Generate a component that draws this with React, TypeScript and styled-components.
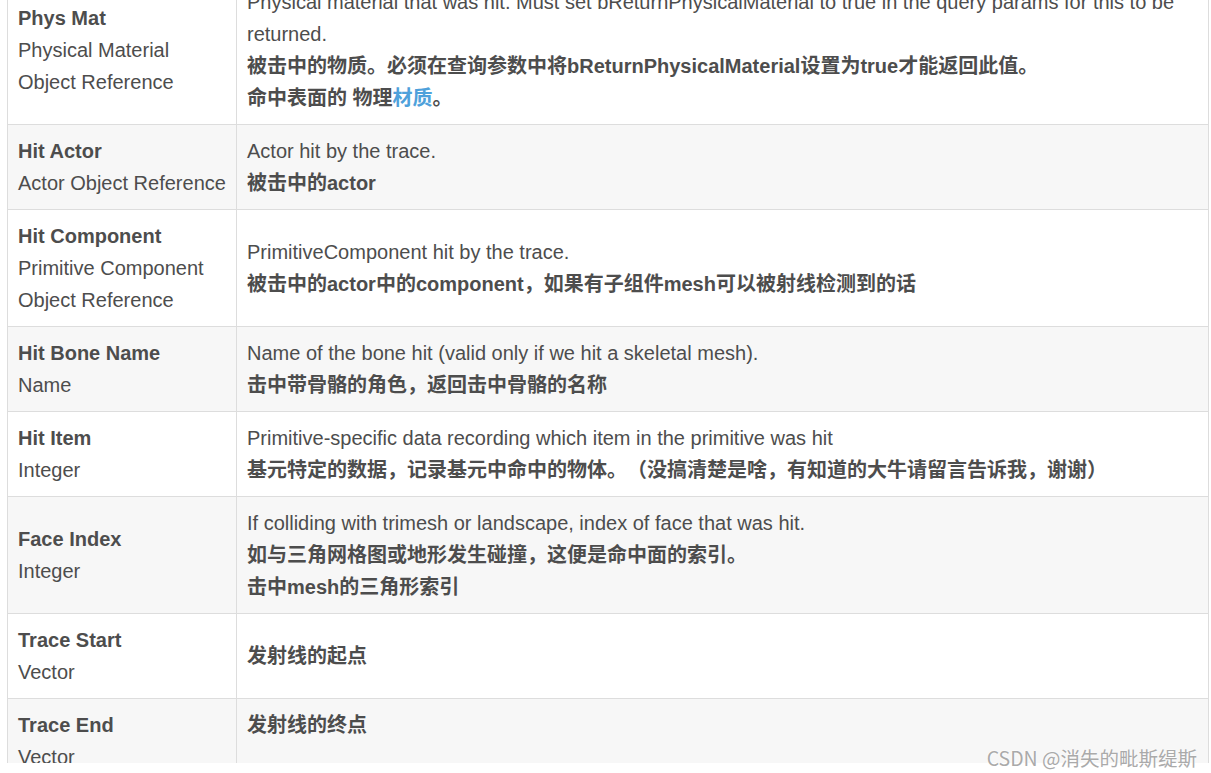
import React from "react";
import styled, { createGlobalStyle } from "styled-components";

const Global = createGlobalStyle`
  html, body { margin: 0; padding: 0; background: #fff; }
  body { font-family: "Liberation Sans", Arial, "Noto Sans CJK SC", sans-serif; color: #4d4d4d; }
`;

const Page = styled.div`
  width: 1211px;
  height: 773px;
  overflow: hidden;
  position: relative;
  background: #fff;
`;

const Viewport = styled.div`
  height: 763px;
  overflow: hidden;
  padding-left: 7px;
  padding-right: 2px;
`;

const Table = styled.table`
  width: 1202px;
  margin-top: -25px;
  border-collapse: collapse;
  font-size: 20px;
  line-height: 32px;
  table-layout: fixed;
  text-spacing-trim: space-all;
`;

const Row = styled.tr<{ $alt: boolean }>`
  background: ${(p) => (p.$alt ? "#f7f7f7" : "#ffffff")};
`;

const Cell = styled.td<{ $w?: number; $top?: boolean }>`
  border: 1px solid #dddddd;
  padding: 10px 10px;
  vertical-align: ${(p) => (p.$top ? "top" : "middle")};
  width: ${(p) => (p.$w ? `${p.$w}px` : "auto")};
  box-sizing: border-box;
`;

const Line = styled.div<{ $bold?: boolean }>`
  font-weight: ${(p) => (p.$bold ? 700 : 400)};
  white-space: normal;
`;

const ZhLine = styled.div`
  font-weight: 700;
  font-family: "Liberation Sans", "Noto Sans CJK SC", sans-serif;
`;

const Link = styled.span`
  color: #4ea1db;
`;

const Watermark = styled.div`
  position: absolute;
  right: 14px;
  bottom: 4px;
  font-family: "Noto Sans CJK SC", "Liberation Sans", sans-serif;
  font-size: 19.5px;
  line-height: 22px;
  color: #aaaaaa;
  text-shadow: 0 0 2px #fff, 0 0 2px #fff;
`;

type RowData = {
  name: string;
  types: string[];
  desc: React.ReactNode[];
  top?: boolean;
};

const rows: RowData[] = [
  {
    name: "Phys Mat",
    types: ["Physical Material", "Object Reference"],
    desc: [
      <Line key="a">
        Physical material that was hit. Must set bReturnPhysicalMaterial to true in the query params for this to be returned.
      </Line>,
      <ZhLine key="b">被击中的物质。必须在查询参数中将bReturnPhysicalMaterial设置为true才能返回此值。</ZhLine>,
      <ZhLine key="c">
        命中表面的 物理<Link>材质</Link>。
      </ZhLine>,
    ],
  },
  {
    name: "Hit Actor",
    types: ["Actor Object Reference"],
    desc: [<Line key="a">Actor hit by the trace.</Line>, <ZhLine key="b">被击中的actor</ZhLine>],
  },
  {
    name: "Hit Component",
    types: ["Primitive Component", "Object Reference"],
    desc: [
      <Line key="a">PrimitiveComponent hit by the trace.</Line>,
      <ZhLine key="b">被击中的actor中的component，如果有子组件mesh可以被射线检测到的话</ZhLine>,
    ],
  },
  {
    name: "Hit Bone Name",
    types: ["Name"],
    desc: [
      <Line key="a">Name of the bone hit (valid only if we hit a skeletal mesh).</Line>,
      <ZhLine key="b">击中带骨骼的角色，返回击中骨骼的名称</ZhLine>,
    ],
  },
  {
    name: "Hit Item",
    types: ["Integer"],
    desc: [
      <Line key="a">Primitive-specific data recording which item in the primitive was hit</Line>,
      <ZhLine key="b">基元特定的数据，记录基元中命中的物体。（没搞清楚是啥，有知道的大牛请留言告诉我，谢谢）</ZhLine>,
    ],
  },
  {
    name: "Face Index",
    types: ["Integer"],
    desc: [
      <Line key="a">If colliding with trimesh or landscape, index of face that was hit.</Line>,
      <ZhLine key="b">如与三角网格图或地形发生碰撞，这便是命中面的索引。</ZhLine>,
      <ZhLine key="c">击中mesh的三角形索引</ZhLine>,
    ],
  },
  {
    name: "Trace Start",
    types: ["Vector"],
    desc: [<ZhLine key="a">发射线的起点</ZhLine>],
  },
  {
    name: "Trace End",
    types: ["Vector"],
    desc: [<ZhLine key="a">发射线的终点</ZhLine>],
    top: true,
  },
];

export default function App() {
  return (
    <Page>
      <Global />
      <Viewport>
        <Table>
          <tbody>
            {rows.map((r, i) => (
              <Row key={r.name} $alt={i % 2 === 1}>
                <Cell $w={229}>
                  <Line $bold>{r.name}</Line>
                  {r.types.map((t) => (
                    <Line key={t}>{t}</Line>
                  ))}
                </Cell>
                <Cell $top={r.top}>{r.desc}</Cell>
              </Row>
            ))}
          </tbody>
        </Table>
      </Viewport>
      <Watermark>CSDN @消失的毗斯缇斯</Watermark>
    </Page>
  );
}
